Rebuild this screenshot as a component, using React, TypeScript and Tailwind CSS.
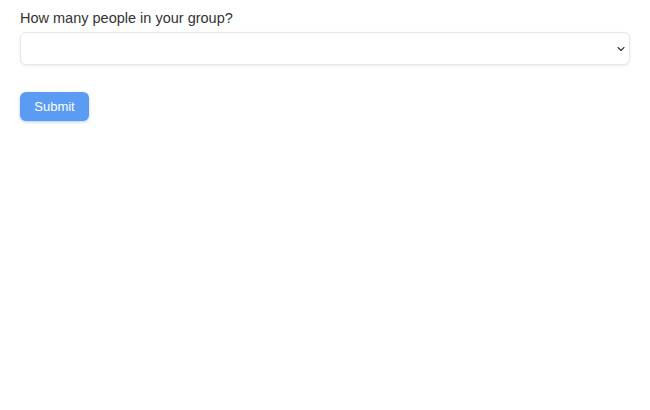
import React from "react";

export default function App() {
  return (
    <div className="w-[650px] h-[410px] bg-white px-5 pt-[6px]" style={{ fontFamily: "'Liberation Sans', Arial, sans-serif" }}>
      <label className="block text-[14.5px] leading-6 text-[#333]">How many people in your group?</label>
      <div className="mt-[2px] h-[33px] w-[610px] rounded-md border border-[#e5e7eb] bg-white shadow-[0_1px_3px_rgba(0,0,0,0.08)] flex items-center justify-end pr-[2px]">
        <svg width="12" height="12" viewBox="0 0 24 24" fill="none" stroke="#333" strokeWidth="2.2" strokeLinecap="round" strokeLinejoin="round">
          <path d="m6 9 6 6 6-6" />
        </svg>
      </div>
      <button className="mt-[27px] h-[29px] w-[69px] rounded-md bg-[#5a9cf4] text-white text-[13px] shadow-[0_1px_3px_rgba(59,130,246,0.4)]">
        Submit
      </button>
    </div>
  );
}
